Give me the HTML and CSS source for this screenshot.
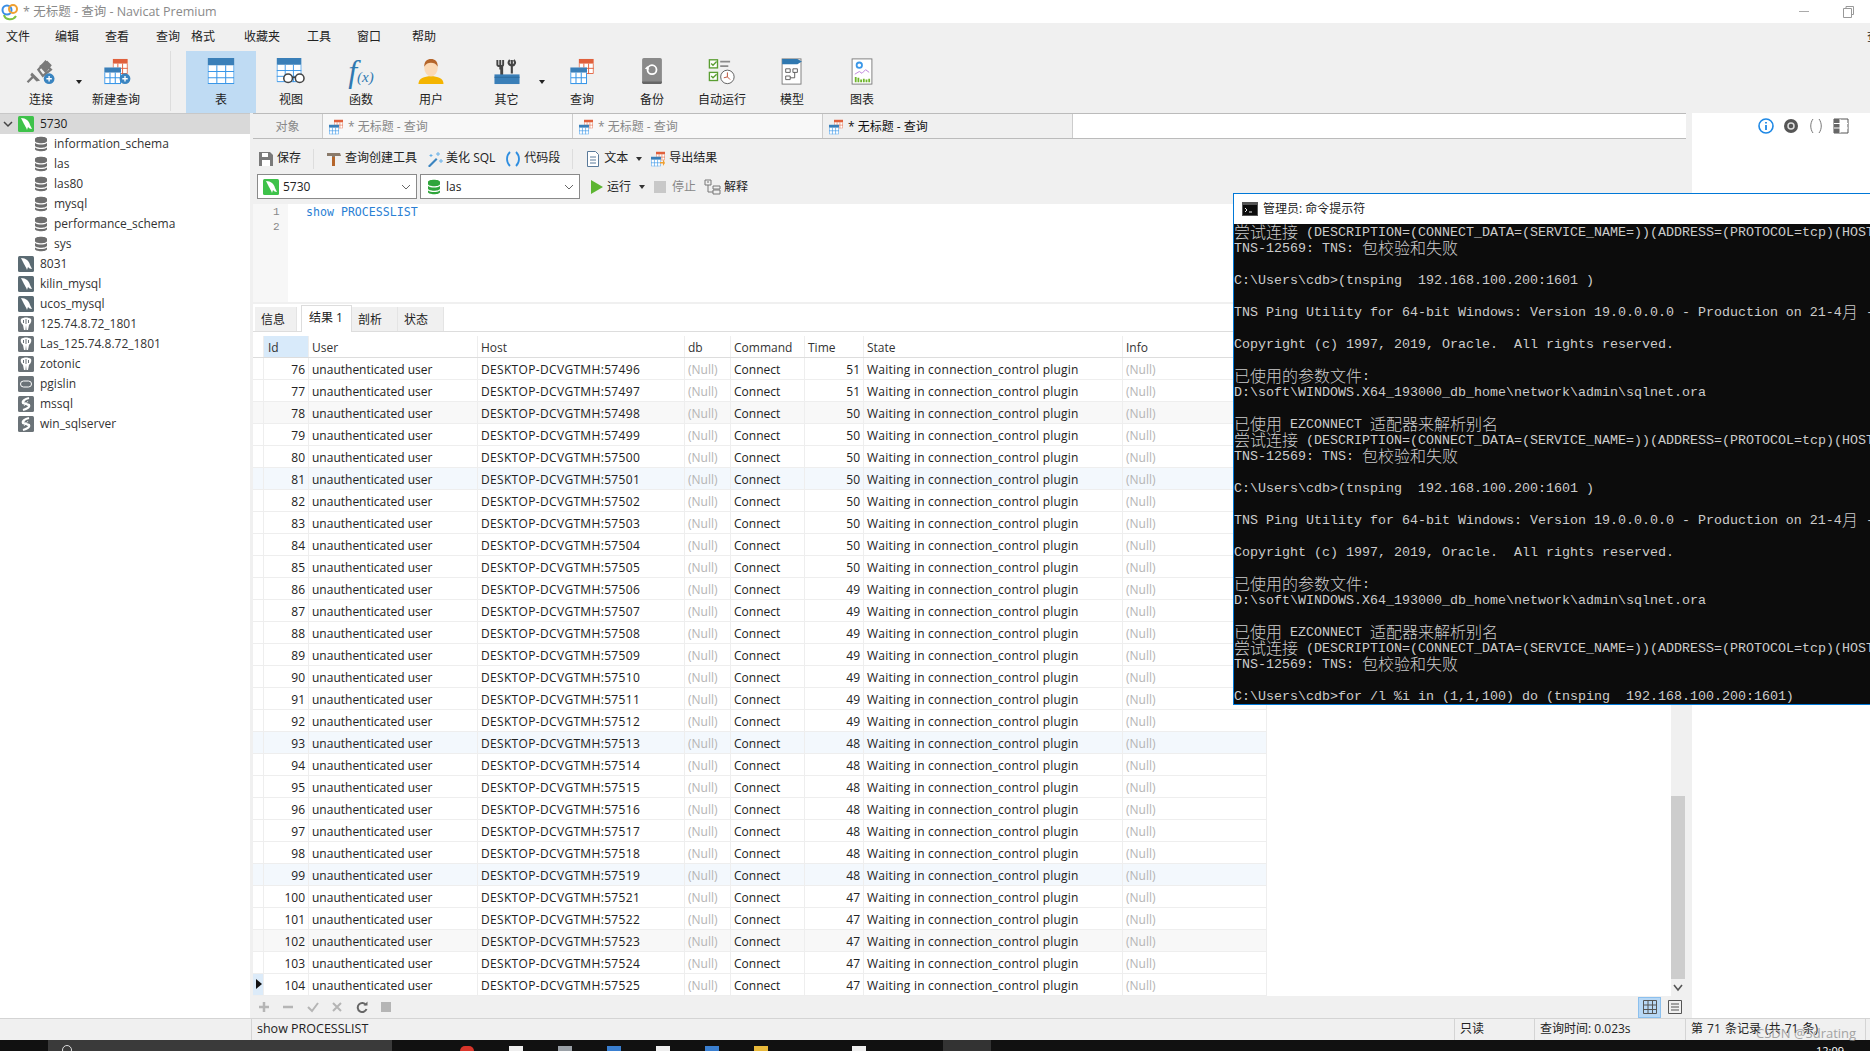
FILE: index.html
```html
<!DOCTYPE html>
<html lang="zh-CN">
<head>
    <meta charset="UTF-8">
    <title>* 无标题 - 查询 - Navicat Premium</title>
    <link rel="stylesheet" href="styles.css">
</head>
<body>
    <svg class="defs">
        <symbol id="i-table" viewBox="0 0 26 26"><rect width="26" height="25" fill="#fff"/><rect width="26" height="7" fill="#3a7fb8"/><path d="M.5 7v17.5h25V7M0 13h26M0 19h26M9 7v18M17.5 7v18" stroke="#3a97e8" fill="none"/></symbol>
        <symbol id="i-table-o" viewBox="0 0 16 16"><rect width="16" height="16" fill="#fff"/><rect width="16" height="5" fill="#e0603c"/><path d="M.5 5v10.5h15V5M0 10h16M5.5 5v11M10.5 5v11" stroke="#e0603c" fill="none"/></symbol>
        <symbol id="i-table-b" viewBox="0 0 16 16"><rect width="16" height="16" fill="#fff"/><rect width="16" height="5" fill="#3a7fb8"/><path d="M.5 5v10.5h15V5M0 10h16M5.5 5v11M10.5 5v11" stroke="#3a97e8" fill="none"/></symbol>
        <symbol id="i-query" viewBox="0 0 32 32"><use href="#i-table-o" x="12" y="1" width="18" height="18"/><use href="#i-table-b" x="2" y="11" width="20" height="20"/></symbol>
        <symbol id="i-db" viewBox="0 0 14 16"><path d="M1 3c0-3 12-3 12 0v2c0 3-12 3-12 0zM1 7c3 2 9 2 12 0v2.500c0 3-12 3-12 0zM1 11.500c3 2 9 2 12 0V13c0 3-12 3-12 0z" fill="currentColor"/></symbol>
        <symbol id="i-dolphin" viewBox="0 0 16 16"><rect width="16" height="16" rx="1.500" fill="currentColor"/><path d="M3 2c5 0 8 3 9 7l2 4c-2 0-3-1-4-2l-1 3c-1-3-2-4-3-6C5 6 4 4 3 2z" fill="#fff"/></symbol>
        <symbol id="i-pg" viewBox="0 0 16 16"><rect width="16" height="16" rx="1.500" fill="#6b7378"/><path d="M3 3c3-2 7-2 10 0 1 3-1 5-2 6l-1 5H8.500L8 9 7.500 14H6L5 9C4 8 2 6 3 3z" fill="#fff"/><path d="M8 3v5M5.500 4v3M10.500 4v3" stroke="#6b7378"/></symbol>
        <symbol id="i-ora" viewBox="0 0 16 16"><rect width="16" height="16" rx="1.500" fill="#6b7378"/><rect x="2.500" y="5" width="11" height="6" rx="3" fill="none" stroke="#fff"/></symbol>
        <symbol id="i-ms" viewBox="0 0 16 16"><rect width="16" height="16" rx="1.500" fill="#6b7378"/><path d="M11 2C7 3 4 5 5 7l6 2c1 2-2 4-6 5" fill="none" stroke="#fff" stroke-width="2.200"/><path d="M6 5l4 5M10 5l-4 5" stroke="#fff" stroke-width=".7"/></symbol>
    </svg>

    <div class="title_bar">
        <svg class="logo" viewBox="0 0 18 18"><circle cx="6" cy="7" r="4.500" fill="none" stroke="#3a8ee6" stroke-width="2"/><circle cx="12" cy="6" r="4" fill="none" stroke="#f0a030" stroke-width="2"/><path d="M3 12c1 5 9 6 12 1" fill="none" stroke="#7cc242" stroke-width="2"/></svg>
        <span class="title_text">* 无标题 - 查询 - Navicat Premium</span>
        <span class="win_min"></span>
        <svg class="win_restore" viewBox="0 0 11 12"><path d="M3 2.500V.5h7.500v8H8.500M.5 2.500h8v9h-8z" fill="none" stroke="#999"/></svg>
    </div>

    <div class="menu">
        <span>文件</span><span>编辑</span><span>查看</span><span>查询</span><span>格式</span><span>收藏夹</span><span>工具</span><span>窗口</span><span>帮助</span>
        <span class="menu_cut">查</span>
    </div>

    <div class="toolbar">
        <div class="tool">
            <svg viewBox="0 0 34 30"><path d="M2 27l6-6M14 13l8-9 4 4-2 1 4 4-9 7z" fill="none" stroke="#7a7a7a" stroke-width="2.500"/><path d="M7 16l9 9-4 1-7-7zM15 9l9-6 5 5-7 9z" fill="#7a7a7a"/><circle cx="26" cy="23" r="6" fill="#3a84c0"/><path d="M23 23h6M26 20v6" stroke="#fff" stroke-width="1.500"/></svg>
            <span>连接</span>
        </div>
        <i class="caret caret_tool"></i>
        <div class="tool tool_new">
            <svg viewBox="0 0 34 30"><use href="#i-query"/><circle cx="27" cy="23" r="6" fill="#3a84c0"/><path d="M24 23h6M27 20v6" stroke="#fff" stroke-width="1.500"/></svg>
            <span>新建查询</span>
        </div>
        <div class="tool_sep"></div>
        <div class="tool on">
            <svg viewBox="0 0 26 26"><use href="#i-table"/></svg>
            <span>表</span>
        </div>
        <div class="tool">
            <svg viewBox="0 0 30 28"><use href="#i-table" width="26" height="26"/><circle cx="12" cy="21" r="4.500" fill="#fff" stroke="#444" stroke-width="1.600"/><circle cx="24" cy="21" r="4.500" fill="#fff" stroke="#444" stroke-width="1.600"/><path d="M16 20h4" stroke="#444" stroke-width="1.600"/></svg>
            <span>视图</span>
        </div>
        <div class="tool">
            <div class="fx"><b>f</b><em>(x)</em></div>
            <span>函数</span>
        </div>
        <div class="tool">
            <svg viewBox="0 0 28 28"><path d="M1 27c0-6 6-8 13-8s13 2 13 8z" fill="#f4b400"/><ellipse cx="14" cy="10" rx="7" ry="9" fill="#fbd9b5"/><path d="M7 9c0-6 3-8 7-8s7 2 7 8c-2-3-4-4-7-4s-5 1-7 4z" fill="#b5652a"/></svg>
            <span>用户</span>
        </div>
        <div class="tool tool_wide">
            <svg viewBox="0 0 28 28"><path d="M7 2v10M4 2v5c0 2 6 2 6 0V2" fill="none" stroke="#444" stroke-width="2"/><path d="M19 2v14M17 2c-2 2-2 5 2 6 4-1 4-4 2-6" fill="none" stroke="#444" stroke-width="2.200"/><rect x="7" y="8" width="3" height="12" fill="#444"/><path d="M1 17h26v10H1z" fill="#3a7fb8"/><path d="M1 20h26" stroke="#2d6a9c"/></svg>
            <span>其它</span>
        </div>
        <i class="caret caret_other"></i>
        <div class="tool">
            <svg viewBox="0 0 32 32"><use href="#i-query"/></svg>
            <span>查询</span>
        </div>
        <div class="tool">
            <svg viewBox="0 0 26 30"><rect x="2" y="0" width="22" height="29" rx="2" fill="#8a8a8a"/><path d="M2 26h22v1c0 1-1 2-2 2H4c-1 0-2-1-2-2z" fill="#666"/><circle cx="13" cy="13" r="5" fill="none" stroke="#fff" stroke-width="2"/><path d="M5 12l3-3 2 4z" fill="#fff"/></svg>
            <span>备份</span>
        </div>
        <div class="tool">
            <svg viewBox="0 0 30 30"><rect x="1" y="2" width="9" height="9" fill="#fff" stroke="#5a9e32" stroke-width="1.500"/><rect x="1" y="16" width="9" height="9" fill="#fff" stroke="#5a9e32" stroke-width="1.500"/><path d="M3 6l2 2 4-4M3 20l2 2 4-4" fill="none" stroke="#5a9e32" stroke-width="1.500"/><path d="M13 4h11M13 9h9" stroke="#8a8a8a" stroke-width="2"/><circle cx="21" cy="21" r="7.500" fill="#fff" stroke="#555"/><path d="M21 16v5l3 3M21 21l-4 1" fill="none" stroke="#b5452a"/></svg>
            <span>自动运行</span>
        </div>
        <div class="tool">
            <svg viewBox="0 0 24 30"><rect x="1" y="1" width="21" height="28" fill="#fff" stroke="#777"/><path d="M1 1h17l5 3-5 3H1z" fill="#2f78b0"/><path d="M5 12h5v4H5zM13 12h5v4h-5zM5 20h5v4H5zM10 22h5v-6" fill="none" stroke="#555"/></svg>
            <span>模型</span>
        </div>
        <div class="tool">
            <svg viewBox="0 0 24 30"><rect x="1" y="1" width="22" height="28" fill="#fff" stroke="#777"/><circle cx="9" cy="8" r="3" fill="none" stroke="#3a97e8" stroke-width="2"/><path d="M4 18l5-3 3 2 4-4 4 3" fill="none" stroke="#b87cd8"/><path d="M5 27v-6M8 27v-5M11 27v-3M14 27v-4M17 27v-3M20 27v-4" stroke="#6fb52c" stroke-width="2"/></svg>
            <span>图表</span>
        </div>
    </div>

    <div class="workspace">
        <div class="sidebar">
            <div class="tree_row on">
                <svg class="chevron" viewBox="0 0 10 10"><path d="M1 3l4 4 4-4" fill="none" stroke="#444" stroke-width="1.500"/></svg>
                <svg class="tree_ico ico_green"><use href="#i-dolphin"/></svg>5730
            </div>
            <div class="tree_row child"><svg class="tree_ico db_ico"><use href="#i-db"/></svg>information_schema</div>
            <div class="tree_row child"><svg class="tree_ico db_ico"><use href="#i-db"/></svg>las</div>
            <div class="tree_row child"><svg class="tree_ico db_ico"><use href="#i-db"/></svg>las80</div>
            <div class="tree_row child"><svg class="tree_ico db_ico"><use href="#i-db"/></svg>mysql</div>
            <div class="tree_row child"><svg class="tree_ico db_ico"><use href="#i-db"/></svg>performance_schema</div>
            <div class="tree_row child"><svg class="tree_ico db_ico"><use href="#i-db"/></svg>sys</div>
            <div class="tree_row"><svg class="tree_ico ico_grey"><use href="#i-dolphin"/></svg>8031</div>
            <div class="tree_row"><svg class="tree_ico ico_grey"><use href="#i-dolphin"/></svg>kilin_mysql</div>
            <div class="tree_row"><svg class="tree_ico ico_grey"><use href="#i-dolphin"/></svg>ucos_mysql</div>
            <div class="tree_row"><svg class="tree_ico"><use href="#i-pg"/></svg>125.74.8.72_1801</div>
            <div class="tree_row"><svg class="tree_ico"><use href="#i-pg"/></svg>Las_125.74.8.72_1801</div>
            <div class="tree_row"><svg class="tree_ico"><use href="#i-pg"/></svg>zotonic</div>
            <div class="tree_row"><svg class="tree_ico"><use href="#i-ora"/></svg>pgislin</div>
            <div class="tree_row"><svg class="tree_ico"><use href="#i-ms"/></svg>mssql</div>
            <div class="tree_row"><svg class="tree_ico"><use href="#i-ms"/></svg>win_sqlserver</div>
        </div>

        <div class="main">
            <div class="tabs">
                <div class="tab tab_obj">对象</div>
                <div class="tab"><svg class="ico16" viewBox="0 0 32 32"><use href="#i-query"/></svg>* 无标题 - 查询</div>
                <div class="tab"><svg class="ico16" viewBox="0 0 32 32"><use href="#i-query"/></svg>* 无标题 - 查询</div>
                <div class="tab on"><svg class="ico16" viewBox="0 0 32 32"><use href="#i-query"/></svg>* 无标题 - 查询</div>
            </div>

            <div class="query_tools">
                <svg class="ico16 first" viewBox="0 0 16 16"><path d="M1 1h11l3 3v11H1z" fill="#7a7a7a"/><rect x="4" y="2" width="6" height="4" fill="#fff"/><rect x="4" y="9" width="8" height="6" fill="#fff"/></svg>
                <span>保存</span>
                <i class="vsep"></i>
                <svg class="ico16" viewBox="0 0 16 16"><path d="M1 2h13l1 3H9v10H6V5H1z" fill="#8a7a6a"/><rect x="6" y="6" width="3" height="9" fill="#b5652a"/></svg>
                <span>查询创建工具</span>
                <svg class="ico16 gap_l" viewBox="0 0 16 16"><path d="M1 15l8-8 1.500 1.500-8 8z" fill="#3a84c0"/><path d="M11 1v4M9 3h4M4 3v3M2.500 4.500h3M14 8v4M12 10h4" stroke="#66b0e8"/></svg>
                <span>美化 SQL</span>
                <svg class="ico16 gap_l" viewBox="0 0 16 16"><path d="M5 1C1 5 1 11 5 15M11 1c4 4 4 10 0 14" fill="none" stroke="#2f8ee0" stroke-width="1.800"/></svg>
                <span>代码段</span>
                <i class="vsep"></i>
                <svg class="ico16" viewBox="0 0 16 16"><path d="M2.500.5h8l3 3v12h-11z" fill="#fff" stroke="#5a7a9a"/><path d="M5 6h6M5 9h6M5 12h6" stroke="#5a7a9a"/></svg>
                <span>文本</span>
                <i class="caret caret_small"></i>
                <svg class="ico16 gap_s" viewBox="0 0 32 32"><use href="#i-query"/><path d="M20 22h6v-6l4 8-4 6v-5h-6z" fill="#f0a030"/></svg>
                <span>导出结果</span>
            </div>

            <div class="run_tools">
                <div class="combo">
                    <svg class="ico16 ico_green"><use href="#i-dolphin"/></svg>
                    <span>5730</span>
                    <svg class="combo_arrow" viewBox="0 0 10 6"><path d="M1 1l4 4 4-4" fill="none" stroke="#666"/></svg>
                </div>
                <div class="combo">
                    <svg class="ico16 ico_db_green"><use href="#i-db"/></svg>
                    <span>las</span>
                    <svg class="combo_arrow" viewBox="0 0 10 6"><path d="M1 1l4 4 4-4" fill="none" stroke="#666"/></svg>
                </div>
                <svg class="run_ico" viewBox="0 0 14 14"><path d="M1 0l12 7-12 7z" fill="#5cb531"/></svg>
                <span class="run_text">运行</span>
                <i class="caret caret_small"></i>
                <i class="stop_ico"></i>
                <span class="run_text muted">停止</span>
                <svg class="ico16 explain_ico" viewBox="0 0 18 16"><path d="M1 1h6v5H1zM3 3h2M4 6v7h5M9 7h7v3H9zM9 11h7v4H9z" fill="none" stroke="#777"/></svg>
                <span class="run_text">解释</span>
            </div>

            <div class="editor">
                <div class="gutter"><div>1</div><div>2</div></div>
                <div class="sql">show PROCESSLIST</div>
            </div>

            <div class="result_tabs">
                <div class="rtab">信息</div>
                <div class="rtab on">结果 1</div>
                <div class="rtab">剖析</div>
                <div class="rtab">状态</div>
            </div>

            <div class="result">
                <div class="grid">
                    <div class="row head"><div></div><div class="sel">Id</div><div>User</div><div>Host</div><div>db</div><div>Command</div><div>Time</div><div>State</div><div>Info</div></div>
                    <div class="row"><div></div><div class="num">76</div><div>unauthenticated user</div><div>DESKTOP-DCVGTMH:57496</div><div class="nul">(Null)</div><div>Connect</div><div class="num">51</div><div>Waiting in connection_control plugin</div><div class="nul">(Null)</div></div>
                    <div class="row"><div></div><div class="num">77</div><div>unauthenticated user</div><div>DESKTOP-DCVGTMH:57497</div><div class="nul">(Null)</div><div>Connect</div><div class="num">51</div><div>Waiting in connection_control plugin</div><div class="nul">(Null)</div></div>
                    <div class="row tint"><div></div><div class="num">78</div><div>unauthenticated user</div><div>DESKTOP-DCVGTMH:57498</div><div class="nul">(Null)</div><div>Connect</div><div class="num">50</div><div>Waiting in connection_control plugin</div><div class="nul">(Null)</div></div>
                    <div class="row"><div></div><div class="num">79</div><div>unauthenticated user</div><div>DESKTOP-DCVGTMH:57499</div><div class="nul">(Null)</div><div>Connect</div><div class="num">50</div><div>Waiting in connection_control plugin</div><div class="nul">(Null)</div></div>
                    <div class="row"><div></div><div class="num">80</div><div>unauthenticated user</div><div>DESKTOP-DCVGTMH:57500</div><div class="nul">(Null)</div><div>Connect</div><div class="num">50</div><div>Waiting in connection_control plugin</div><div class="nul">(Null)</div></div>
                    <div class="row blue"><div></div><div class="num">81</div><div>unauthenticated user</div><div>DESKTOP-DCVGTMH:57501</div><div class="nul">(Null)</div><div>Connect</div><div class="num">50</div><div>Waiting in connection_control plugin</div><div class="nul">(Null)</div></div>
                    <div class="row"><div></div><div class="num">82</div><div>unauthenticated user</div><div>DESKTOP-DCVGTMH:57502</div><div class="nul">(Null)</div><div>Connect</div><div class="num">50</div><div>Waiting in connection_control plugin</div><div class="nul">(Null)</div></div>
                    <div class="row"><div></div><div class="num">83</div><div>unauthenticated user</div><div>DESKTOP-DCVGTMH:57503</div><div class="nul">(Null)</div><div>Connect</div><div class="num">50</div><div>Waiting in connection_control plugin</div><div class="nul">(Null)</div></div>
                    <div class="row"><div></div><div class="num">84</div><div>unauthenticated user</div><div>DESKTOP-DCVGTMH:57504</div><div class="nul">(Null)</div><div>Connect</div><div class="num">50</div><div>Waiting in connection_control plugin</div><div class="nul">(Null)</div></div>
                    <div class="row"><div></div><div class="num">85</div><div>unauthenticated user</div><div>DESKTOP-DCVGTMH:57505</div><div class="nul">(Null)</div><div>Connect</div><div class="num">50</div><div>Waiting in connection_control plugin</div><div class="nul">(Null)</div></div>
                    <div class="row"><div></div><div class="num">86</div><div>unauthenticated user</div><div>DESKTOP-DCVGTMH:57506</div><div class="nul">(Null)</div><div>Connect</div><div class="num">49</div><div>Waiting in connection_control plugin</div><div class="nul">(Null)</div></div>
                    <div class="row"><div></div><div class="num">87</div><div>unauthenticated user</div><div>DESKTOP-DCVGTMH:57507</div><div class="nul">(Null)</div><div>Connect</div><div class="num">49</div><div>Waiting in connection_control plugin</div><div class="nul">(Null)</div></div>
                    <div class="row"><div></div><div class="num">88</div><div>unauthenticated user</div><div>DESKTOP-DCVGTMH:57508</div><div class="nul">(Null)</div><div>Connect</div><div class="num">49</div><div>Waiting in connection_control plugin</div><div class="nul">(Null)</div></div>
                    <div class="row"><div></div><div class="num">89</div><div>unauthenticated user</div><div>DESKTOP-DCVGTMH:57509</div><div class="nul">(Null)</div><div>Connect</div><div class="num">49</div><div>Waiting in connection_control plugin</div><div class="nul">(Null)</div></div>
                    <div class="row"><div></div><div class="num">90</div><div>unauthenticated user</div><div>DESKTOP-DCVGTMH:57510</div><div class="nul">(Null)</div><div>Connect</div><div class="num">49</div><div>Waiting in connection_control plugin</div><div class="nul">(Null)</div></div>
                    <div class="row"><div></div><div class="num">91</div><div>unauthenticated user</div><div>DESKTOP-DCVGTMH:57511</div><div class="nul">(Null)</div><div>Connect</div><div class="num">49</div><div>Waiting in connection_control plugin</div><div class="nul">(Null)</div></div>
                    <div class="row"><div></div><div class="num">92</div><div>unauthenticated user</div><div>DESKTOP-DCVGTMH:57512</div><div class="nul">(Null)</div><div>Connect</div><div class="num">49</div><div>Waiting in connection_control plugin</div><div class="nul">(Null)</div></div>
                    <div class="row blue"><div></div><div class="num">93</div><div>unauthenticated user</div><div>DESKTOP-DCVGTMH:57513</div><div class="nul">(Null)</div><div>Connect</div><div class="num">48</div><div>Waiting in connection_control plugin</div><div class="nul">(Null)</div></div>
                    <div class="row"><div></div><div class="num">94</div><div>unauthenticated user</div><div>DESKTOP-DCVGTMH:57514</div><div class="nul">(Null)</div><div>Connect</div><div class="num">48</div><div>Waiting in connection_control plugin</div><div class="nul">(Null)</div></div>
                    <div class="row"><div></div><div class="num">95</div><div>unauthenticated user</div><div>DESKTOP-DCVGTMH:57515</div><div class="nul">(Null)</div><div>Connect</div><div class="num">48</div><div>Waiting in connection_control plugin</div><div class="nul">(Null)</div></div>
                    <div class="row"><div></div><div class="num">96</div><div>unauthenticated user</div><div>DESKTOP-DCVGTMH:57516</div><div class="nul">(Null)</div><div>Connect</div><div class="num">48</div><div>Waiting in connection_control plugin</div><div class="nul">(Null)</div></div>
                    <div class="row"><div></div><div class="num">97</div><div>unauthenticated user</div><div>DESKTOP-DCVGTMH:57517</div><div class="nul">(Null)</div><div>Connect</div><div class="num">48</div><div>Waiting in connection_control plugin</div><div class="nul">(Null)</div></div>
                    <div class="row"><div></div><div class="num">98</div><div>unauthenticated user</div><div>DESKTOP-DCVGTMH:57518</div><div class="nul">(Null)</div><div>Connect</div><div class="num">48</div><div>Waiting in connection_control plugin</div><div class="nul">(Null)</div></div>
                    <div class="row blue"><div></div><div class="num">99</div><div>unauthenticated user</div><div>DESKTOP-DCVGTMH:57519</div><div class="nul">(Null)</div><div>Connect</div><div class="num">48</div><div>Waiting in connection_control plugin</div><div class="nul">(Null)</div></div>
                    <div class="row"><div></div><div class="num">100</div><div>unauthenticated user</div><div>DESKTOP-DCVGTMH:57521</div><div class="nul">(Null)</div><div>Connect</div><div class="num">47</div><div>Waiting in connection_control plugin</div><div class="nul">(Null)</div></div>
                    <div class="row"><div></div><div class="num">101</div><div>unauthenticated user</div><div>DESKTOP-DCVGTMH:57522</div><div class="nul">(Null)</div><div>Connect</div><div class="num">47</div><div>Waiting in connection_control plugin</div><div class="nul">(Null)</div></div>
                    <div class="row tint"><div></div><div class="num">102</div><div>unauthenticated user</div><div>DESKTOP-DCVGTMH:57523</div><div class="nul">(Null)</div><div>Connect</div><div class="num">47</div><div>Waiting in connection_control plugin</div><div class="nul">(Null)</div></div>
                    <div class="row"><div></div><div class="num">103</div><div>unauthenticated user</div><div>DESKTOP-DCVGTMH:57524</div><div class="nul">(Null)</div><div>Connect</div><div class="num">47</div><div>Waiting in connection_control plugin</div><div class="nul">(Null)</div></div>
                    <div class="row current"><div class="marker"></div><div class="num">104</div><div>unauthenticated user</div><div>DESKTOP-DCVGTMH:57525</div><div class="nul">(Null)</div><div>Connect</div><div class="num">47</div><div>Waiting in connection_control plugin</div><div class="nul">(Null)</div></div>
                </div>
                <div class="scroll">
                    <div class="thumb"></div>
                    <svg class="scroll_arrow" viewBox="0 0 10 8"><path d="M1 1l4 5 4-5" fill="none" stroke="#555" stroke-width="1.600"/></svg>
                </div>
            </div>

            <div class="grid_bar">
                <svg class="bar_ico" viewBox="0 0 12 12"><path d="M6 1v10M1 6h10" stroke="#b5b5b5" stroke-width="2.500"/></svg>
                <svg class="bar_ico" viewBox="0 0 12 12"><path d="M1 6h10" stroke="#b5b5b5" stroke-width="2.500"/></svg>
                <svg class="bar_ico" viewBox="0 0 12 12"><path d="M1 6l4 4 6-8" fill="none" stroke="#b5b5b5" stroke-width="2"/></svg>
                <svg class="bar_ico" viewBox="0 0 12 12"><path d="M2 2l8 8M10 2l-8 8" stroke="#b5b5b5" stroke-width="2"/></svg>
                <svg class="bar_ico" viewBox="0 0 12 12"><path d="M10 4A4.500 4.500 0 1 0 10.500 8" fill="none" stroke="#666" stroke-width="2"/><path d="M7.500 4.500H11.500V.5z" fill="#666"/></svg>
                <svg class="bar_ico" viewBox="0 0 12 12"><rect x="1" y="1" width="10" height="10" fill="#b5b5b5"/></svg>
                <div class="view_btn on"><svg viewBox="0 0 14 14"><path d="M.5.5h13v13H.5zM.5 5h13M.5 9.500h13M5 .5v13M9.500.5v13" fill="none" stroke="#555"/></svg></div>
                <div class="view_btn"><svg viewBox="0 0 14 14"><path d="M.5.5h13v13H.5zM3 4h8M3 7h8M3 10h8" fill="none" stroke="#555"/></svg></div>
            </div>
        </div>

        <div class="side_panel">
            <svg class="ico16" viewBox="0 0 16 16"><circle cx="8" cy="8" r="7" fill="#fff" stroke="#1e88e5" stroke-width="1.600"/><path d="M8 7v5M8 4v1.500" stroke="#1e88e5" stroke-width="1.800"/></svg>
            <svg class="ico16" viewBox="0 0 16 16"><circle cx="8" cy="8" r="7" fill="#555"/><circle cx="8" cy="8" r="3" fill="none" stroke="#ddd" stroke-width="1.500"/></svg>
            <svg class="ico16" viewBox="0 0 16 16"><path d="M5 1C2 5 2 11 5 15M11 1c3 4 3 10 0 14" fill="none" stroke="#777"/></svg>
            <svg class="ico16" viewBox="0 0 16 16"><path d="M1 1h14v14H1z" fill="#fff" stroke="#555"/><path d="M1 1h6v14H1z" fill="#666"/><path d="M1 5.500h14M1 10h14M7 1v14" stroke="#fff"/></svg>
        </div>
    </div>

    <div class="status_bar">
        <div class="st_empty"></div>
        <div class="st_sql">show PROCESSLIST</div>
        <div class="st_ro">只读</div>
        <div class="st_time">查询时间: 0.023s</div>
        <div class="st_rec">第 71 条记录 (共 71 条)</div>
    </div>

    <div class="taskbar">
        <div class="search"><i></i></div>
        <div class="task_icons">
            <i class="t_red"></i><i class="t_white"></i><i class="t_grey"></i><i class="t_blue"></i><i class="t_white"></i><i class="t_blue"></i><i class="t_yellow"></i><i class="t_none"></i><i class="t_white"></i>
        </div>
        <div class="task_active"></div>
        <div class="clock">12:09</div>
    </div>

    <div class="watermark">CSDN @Sdrating</div>

    <div class="cmd">
        <div class="cmd_title">
            <svg class="cmd_ico" viewBox="0 0 16 14"><rect width="16" height="14" fill="#555"/><rect x="1" y="3" width="14" height="10" fill="#0c0c0c"/><path d="M3 6l2 2-2 2M7 10h3" fill="none" stroke="#eee"/></svg>
            管理员: 命令提示符
        </div>
        <div class="cmd_body">
            <div><b>尝试连接</b> (DESCRIPTION=(CONNECT_DATA=(SERVICE_NAME=))(ADDRESS=(PROTOCOL=tcp)(HOST=192.168.100.200)(PORT=1601)))</div>
            <div>TNS-12569: TNS: <b>包校验和失败</b></div>
            <div></div>
            <div>C:\Users\cdb&gt;(tnsping  192.168.100.200:1601 )</div>
            <div></div>
            <div>TNS Ping Utility for 64-bit Windows: Version 19.0.0.0.0 - Production on 21-4<b>月</b> -2022 12:08:41</div>
            <div></div>
            <div>Copyright (c) 1997, 2019, Oracle.  All rights reserved.</div>
            <div></div>
            <div><b>已使用的参数文件</b>:</div>
            <div>D:\soft\WINDOWS.X64_193000_db_home\network\admin\sqlnet.ora</div>
            <div></div>
            <div><b>已使用</b> EZCONNECT <b>适配器来解析别名</b></div>
            <div><b>尝试连接</b> (DESCRIPTION=(CONNECT_DATA=(SERVICE_NAME=))(ADDRESS=(PROTOCOL=tcp)(HOST=192.168.100.200)(PORT=1601)))</div>
            <div>TNS-12569: TNS: <b>包校验和失败</b></div>
            <div></div>
            <div>C:\Users\cdb&gt;(tnsping  192.168.100.200:1601 )</div>
            <div></div>
            <div>TNS Ping Utility for 64-bit Windows: Version 19.0.0.0.0 - Production on 21-4<b>月</b> -2022 12:08:42</div>
            <div></div>
            <div>Copyright (c) 1997, 2019, Oracle.  All rights reserved.</div>
            <div></div>
            <div><b>已使用的参数文件</b>:</div>
            <div>D:\soft\WINDOWS.X64_193000_db_home\network\admin\sqlnet.ora</div>
            <div></div>
            <div><b>已使用</b> EZCONNECT <b>适配器来解析别名</b></div>
            <div><b>尝试连接</b> (DESCRIPTION=(CONNECT_DATA=(SERVICE_NAME=))(ADDRESS=(PROTOCOL=tcp)(HOST=192.168.100.200)(PORT=1601)))</div>
            <div>TNS-12569: TNS: <b>包校验和失败</b></div>
            <div></div>
            <div>C:\Users\cdb&gt;for /l %i in (1,1,100) do (tnsping  192.168.100.200:1601)</div>
        </div>
    </div>
</body>
</html>
```

FILE: styles.css
```css
*{margin:0;padding:0;box-sizing:border-box;}
html,body{height:100%;}
body{position:relative;display:flex;flex-direction:column;width:1870px;height:1051px;overflow:hidden;background:#f0f0f0;color:#222;font:12px/1.2 "Open Sans","Noto Sans CJK SC",sans-serif;}
i{display:block;font-style:normal;}
.defs{display:none;}
.ico16{flex:none;width:16px;height:16px;}

/* title + menu */
.title_bar{display:flex;align-items:center;flex:none;height:23px;background:#fff;}
.logo{width:18px;height:18px;margin-left:1px;}
.title_text{margin-left:4px;color:#8a8a8a;font-size:12.5px;}
.win_min{width:10px;height:1px;margin-left:auto;background:#aaa;}
.win_restore{width:11px;height:12px;margin:0 16px 0 34px;}
.menu{display:flex;align-items:center;flex:none;height:28px;padding:0 0 0 6px;white-space:nowrap;}
.menu span{flex:none;}
.menu span:nth-child(1){width:49px;}
.menu span:nth-child(2){width:50px;}
.menu span:nth-child(3){width:51px;}
.menu span:nth-child(4){width:35px;}
.menu span:nth-child(5){width:53px;}
.menu span:nth-child(6){width:63px;}
.menu span:nth-child(7){width:50px;}
.menu span:nth-child(8){width:55px;}
.menu .menu_cut{margin-left:auto;margin-right:-9px;width:12px;}

/* main toolbar */
.toolbar{display:flex;align-items:stretch;flex:none;height:62px;padding-left:6px;}
.tool{display:flex;flex-direction:column;align-items:center;flex:none;width:70px;padding-top:7px;}
.tool svg{width:32px;height:27px;}
.tool span{margin-top:8px;}
.tool.on{background:#bfdbf3;}
.tool_new{margin-left:5px;}
.tool_wide{width:81px;}
.tool_sep{flex:none;width:1px;height:60px;margin:0 15px 0 19px;background:#ddd;}
.caret{flex:none;width:0;height:0;border:3px solid transparent;border-top:4px solid #222;border-bottom:0;}
.caret_tool{align-self:flex-start;margin:29px -6px 0 0;}
.caret_other{align-self:flex-start;margin:29px 2px 0 -8px;}
.fx{display:flex;align-items:baseline;justify-content:center;height:27px;color:#2f78b0;font-family:"Liberation Serif",serif;font-style:italic;line-height:27px;}
.fx b{font-size:32px;font-weight:normal;}
.fx em{font-size:15px;}

/* workspace */
.workspace{display:flex;flex:1;min-height:0;}
.sidebar{flex:none;width:250px;background:#fff;border-top:1px solid #c8c8c8;}
.tree_row{display:flex;align-items:center;height:20px;padding-left:18px;color:#333;white-space:nowrap;}
.tree_row.on{position:relative;background:#d9d9d9;color:#222;}
.tree_row.child{padding-left:33px;}
.chevron{position:absolute;left:3px;top:5px;width:10px;height:10px;}
.tree_ico{flex:none;width:16px;height:16px;margin-right:6px;}
.child .tree_ico{margin-right:5px;}
.db_ico{color:#6e6e6e;}
.ico_green{color:#3ec24a;}
.ico_grey{color:#5b6b73;}
.ico_db_green{color:#2fa53a;}

.main{display:flex;flex-direction:column;flex:none;width:1436px;margin-left:3px;}
.tabs{display:flex;flex:none;height:26px;margin-right:3px;background:#fff;border-top:1px solid #bbb;border-bottom:1px solid #bbb;}
.tab{display:flex;align-items:center;gap:4px;flex:none;width:250px;padding:2px 0 0 5px;background:#f8f8f8;border-right:1px solid #ccc;color:#888;}
.tab.on{background:#f0f0f0;color:#111;}
.tab_obj{justify-content:center;width:70px;padding:2px 0 0;background:#f0f0f0;}

.query_tools{display:flex;align-items:center;flex:none;height:35px;padding:4px 0 0 5px;}
.query_tools span{margin-left:3px;white-space:nowrap;}
.vsep{flex:none;width:1px;height:20px;margin:0 12px;background:#ddd;}
.gap_l{margin-left:10px;}
.gap_s{margin-left:8px;}
.caret_small{margin:0 0 0 8px;border-top-color:#333;}

.run_tools{display:flex;align-items:center;flex:none;height:30px;padding:0 0 5px 4px;}
.run_text{padding-top:2px;white-space:nowrap;}
.combo{display:flex;align-items:center;flex:none;width:160px;height:25px;margin-right:3px;padding:0 5px;background:#fff;border:1px solid #8a8a8a;}
.combo span{margin-left:4px;padding-top:2px;font-size:12px;}
.combo_arrow{width:10px;height:6px;margin-left:auto;}
.run_ico{flex:none;width:14px;height:14px;margin:0 3px 0 7px;}
.stop_ico{flex:none;width:12px;height:12px;margin:0 6px 0 9px;background:#c8c8c8;}
.muted{color:#888;}
.explain_ico{width:18px;margin:0 2px 0 8px;}

.editor{display:flex;flex:none;height:100px;background:#fff;border-bottom:2px solid #f0f0f0;}
.gutter{flex:none;width:35px;background:#f7f7f7;color:#888;font:11px/15px "Liberation Mono",monospace;padding:1px 0 0 20px;}
.sql{margin:1px 0 0 18px;color:#2a7fd4;font:11.6px/15px "DejaVu Sans Mono",monospace;}

.result_tabs{display:flex;align-items:flex-end;flex:none;height:28px;padding-left:2px;background:#fff;border-bottom:1px solid #ddd;}
.rtab{display:flex;align-items:center;width:46px;height:24px;padding:2px 0 0 6px;background:#f0f0f0;border-right:1px solid #e4e4e4;}
.rtab:first-child{width:42px;margin-right:4px;}
.rtab.on{width:51px;height:27px;margin-bottom:-1px;padding:0 0 2px 7px;background:#fff;border:1px solid #ddd;border-bottom:0;}

.result{display:flex;flex:1;min-height:0;padding-top:4px;background:#fff;}
.grid{flex:none;width:1014px;}
.row{display:grid;grid-template-columns:11px 45px 169px 207px 46px 74px 59px 259px 144px;height:22px;border-bottom:1px solid #eee;line-height:23px;white-space:nowrap;}
.row > div{padding-left:3px;border-right:1px solid #eee;overflow:hidden;}
.row > .num{padding:0 3px 0 0;text-align:right;}
.row > .nul{color:#b4b4b4;}
.row > div:nth-child(4){letter-spacing:.33px;}
.row > div:nth-child(8){letter-spacing:.23px;}
.head > div:nth-child(4),.head > div:nth-child(8){letter-spacing:0;}
.row.tint{background:#f8f8f8;}
.row.blue{background:#f3f8fd;}
.head{border-bottom-color:#ddd;color:#333;}
.head > .sel{padding-left:4px;background:#d8eafa;}
.current .marker{position:relative;background:#dcebf9;}
.current .marker::after{content:"";position:absolute;left:3px;top:5px;border:5px solid transparent;border-left:6px solid #111;border-right:0;}
.scroll{display:flex;flex-direction:column;align-items:flex-start;flex:none;width:18px;margin:-4px 0 0 404px;background:#f0f0f0;}
.thumb{flex:none;width:14px;height:183px;margin-top:auto;background:#cdcdcd;}
.scroll_arrow{flex:none;width:10px;height:8px;margin:5px 0 4px 2px;}

.grid_bar{display:flex;align-items:center;flex:none;height:22px;padding-left:5px;background:#f0f0f0;}
.bar_ico{flex:none;width:12px;height:12px;margin-right:12.400px;}
.view_btn{display:flex;align-items:center;justify-content:center;flex:none;width:23px;height:21px;}
.view_btn svg{width:14px;height:14px;}
.view_btn.on{margin-left:auto;background:#b8d8f5;border:1px solid #8cc0ee;}
.view_btn + .view_btn{margin:0 3px 0 2px;}

.side_panel{display:flex;gap:9px;flex:1;padding:5px 0 0 66px;background:#fff;border-left:3px solid #f0f0f0;}

/* status + taskbar */
.status_bar{display:flex;flex:none;height:22px;background:#f0f0f0;border-top:1px solid #d4d4d4;line-height:20px;}
.status_bar > div{flex:none;padding-left:5px;border-right:1px solid #d4d4d4;white-space:nowrap;}
.st_empty{width:252px;}
.status_bar .st_sql{width:1203px;font-size:12.5px;}
.st_ro{width:80px;}
.st_time{width:151px;}
.st_rec{width:180px;word-spacing:1px;}
.taskbar{display:flex;flex:none;height:11px;background:#111;overflow:hidden;}
.search{flex:none;width:344px;margin-left:48px;background:#3a3a3a;}
.search i{width:10px;height:10px;margin:5px 0 0 14px;border:1px solid #ddd;border-radius:50%;}
.task_icons{display:flex;gap:35px;flex:none;margin-left:68px;padding-top:6px;}
.task_icons i{flex:none;width:14px;height:5px;}
.t_red{background:#d8352a;border-radius:7px 7px 0 0;}
.t_white{background:#eee;}
.t_grey{background:#9aa0a6;}
.t_blue{background:#3a7fd0;}
.t_yellow{background:#e8b93a;}
.t_none{background:none;}
.task_active{flex:none;width:48px;margin-left:77px;background:#333;}
.clock{margin:4px 26px 0 auto;color:#fff;font-size:11px;}
.watermark{position:absolute;left:1756px;top:1026px;color:#8a8a8a;font-size:13px;opacity:.75;}

/* console window */
.cmd{position:absolute;left:1233px;top:193px;width:640px;height:512px;background:#0c0c0c;border:1px solid #0078d7;}
.cmd_title{display:flex;align-items:center;height:30px;padding-left:8px;background:#fff;color:#222;}
.cmd_ico{width:16px;height:14px;margin-right:5px;}
.cmd_body{height:480px;padding-top:1px;overflow:hidden;color:#ccc;font:13.33px/16px "Liberation Mono",monospace;}
.cmd_body div{height:16px;white-space:pre;}
.cmd_body b{font:300 16px/0 "Noto Sans CJK SC",sans-serif;vertical-align:-2px;}
```
